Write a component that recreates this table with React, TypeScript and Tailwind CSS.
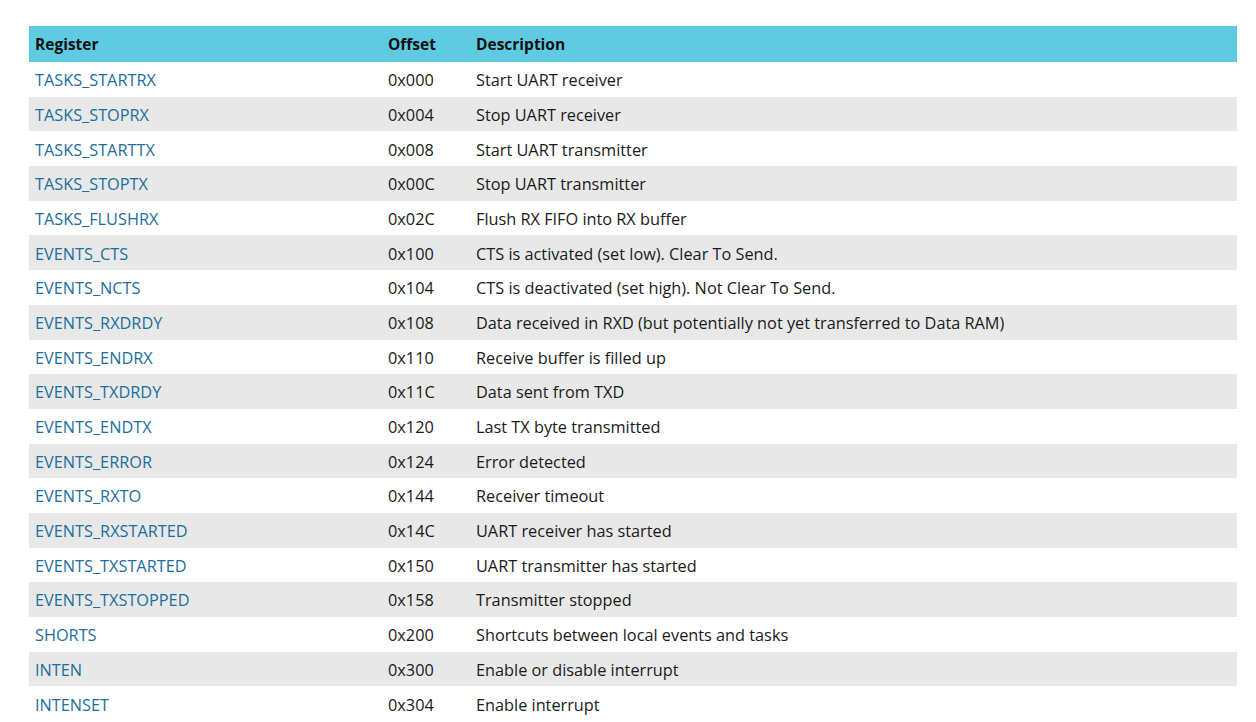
const rows: [string, string, string][] = [
  ["TASKS_STARTRX", "0x000", "Start UART receiver"],
  ["TASKS_STOPRX", "0x004", "Stop UART receiver"],
  ["TASKS_STARTTX", "0x008", "Start UART transmitter"],
  ["TASKS_STOPTX", "0x00C", "Stop UART transmitter"],
  ["TASKS_FLUSHRX", "0x02C", "Flush RX FIFO into RX buffer"],
  ["EVENTS_CTS", "0x100", "CTS is activated (set low). Clear To Send."],
  ["EVENTS_NCTS", "0x104", "CTS is deactivated (set high). Not Clear To Send."],
  ["EVENTS_RXDRDY", "0x108", "Data received in RXD (but potentially not yet transferred to Data RAM)"],
  ["EVENTS_ENDRX", "0x110", "Receive buffer is filled up"],
  ["EVENTS_TXDRDY", "0x11C", "Data sent from TXD"],
  ["EVENTS_ENDTX", "0x120", "Last TX byte transmitted"],
  ["EVENTS_ERROR", "0x124", "Error detected"],
  ["EVENTS_RXTO", "0x144", "Receiver timeout"],
  ["EVENTS_RXSTARTED", "0x14C", "UART receiver has started"],
  ["EVENTS_TXSTARTED", "0x150", "UART transmitter has started"],
  ["EVENTS_TXSTOPPED", "0x158", "Transmitter stopped"],
  ["SHORTS", "0x200", "Shortcuts between local events and tasks"],
  ["INTEN", "0x300", "Enable or disable interrupt"],
  ["INTENSET", "0x304", "Enable interrupt"],
];

export default function App() {
  return (
    <div className="w-[1256px] h-[722px] overflow-hidden bg-white pt-[26px] pl-[29px] font-['Open_Sans',sans-serif] text-[16.3px]">
      <div className="w-[1208px]">
        {/* header */}
        <div className="flex h-[36px] items-center pt-[2px] bg-[#5ecbe2] text-[15.5px] font-bold text-[#111]">
          <div className="w-[353px] pl-[6px]">Register</div>
          <div className="w-[88px] pl-[6px]">Offset</div>
          <div className="flex-1 pl-[6px]">Description</div>
        </div>
        {rows.map(([name, off, desc], i) => (
          <div
            key={name}
            className={`flex h-[34.7px] items-center pt-[2px] ${i % 2 === 1 ? "bg-[#e8e8e8]" : "bg-white"}`}
          >
            <div className="w-[353px] pl-[6px] text-[#1b6e9e]">{name}</div>
            <div className="w-[88px] pl-[6px] text-[#1a1a1a]">{off}</div>
            <div className="flex-1 pl-[6px] text-[#1a1a1a]">{desc}</div>
          </div>
        ))}
      </div>
    </div>
  );
}
